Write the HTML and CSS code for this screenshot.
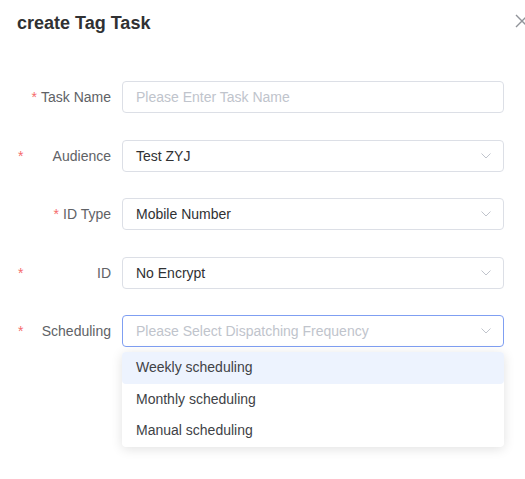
FILE: index.html
```html
<!DOCTYPE html>
<html lang="en">
<head>
  <meta charset="UTF-8" />
  <title>create Tag Task</title>
  <link rel="stylesheet" href="styles.css">
</head>
<body>
  <div class="dialog">
    <header class="dialog-header">
      <h1>create Tag Task</h1>
      <button class="close-btn" aria-label="Close">
        <svg width="14" height="14" viewBox="0 0 14 14"><path d="M1 1L13 13M13 1L1 13" stroke="#909399" stroke-width="1.4" fill="none"/></svg>
      </button>
    </header>

    <form class="task-form">
      <div class="form-row">
        <label class="form-label"><span class="star">*</span>Task Name</label>
        <div class="field">
          <input type="text" placeholder="Please Enter Task Name" />
        </div>
      </div>

      <div class="form-row">
        <label class="form-label split"><span class="star">*</span>Audience</label>
        <div class="field select">
          <span class="value">Test ZYJ</span>
          <svg class="chevron" width="10" height="6" viewBox="0 0 10 6"><path d="M0.5 0.5L5 5L9.5 0.5" stroke="#c0c4cc" fill="none"/></svg>
        </div>
      </div>

      <div class="form-row">
        <label class="form-label"><span class="star">*</span>ID Type</label>
        <div class="field select">
          <span class="value">Mobile Number</span>
          <svg class="chevron" width="10" height="6" viewBox="0 0 10 6"><path d="M0.5 0.5L5 5L9.5 0.5" stroke="#c0c4cc" fill="none"/></svg>
        </div>
      </div>

      <div class="form-row">
        <label class="form-label split"><span class="star">*</span>ID</label>
        <div class="field select">
          <span class="value">No Encrypt</span>
          <svg class="chevron" width="10" height="6" viewBox="0 0 10 6"><path d="M0.5 0.5L5 5L9.5 0.5" stroke="#c0c4cc" fill="none"/></svg>
        </div>
      </div>

      <div class="form-row">
        <label class="form-label split"><span class="star">*</span>Scheduling</label>
        <div class="select-wrap">
          <div class="field select focused">
            <span class="value placeholder">Please Select Dispatching Frequency</span>
            <svg class="chevron" width="10" height="6" viewBox="0 0 10 6"><path d="M0.5 0.5L5 5L9.5 0.5" stroke="#c0c4cc" fill="none"/></svg>
          </div>
          <ul class="dropdown">
            <li class="active">Weekly scheduling</li>
            <li>Monthly scheduling</li>
            <li>Manual scheduling</li>
          </ul>
        </div>
      </div>
    </form>
  </div>
</body>
</html>
```

FILE: styles.css
```css
body {
  margin: 0;
  background: #ffffff;
  font-family: "Liberation Sans", Arial, sans-serif;
  font-size: 14px;
  color: #303133;
}
.dialog {
  position: relative;
  height: 479px;
  overflow: hidden;
}
.dialog-header {
  padding: 11px 17px 0;
  height: 70px;
  box-sizing: border-box;
}
.dialog-header h1 {
  margin: 0;
  font-size: 18px;
  font-weight: bold;
  color: #303133;
  line-height: 24px;
}
.close-btn {
  position: absolute;
  top: 14px;
  right: -4px;
  padding: 0;
  border: none;
  background: none;
  cursor: pointer;
}
.task-form {
  padding: 11px 21px 0 18px;
}
.form-row {
  display: flex;
  align-items: center;
  gap: 11px;
  margin-bottom: 26.5px;
}
.form-label {
  width: 93px;
  flex-shrink: 0;
  text-align: right;
  color: #606266;
  line-height: 32px;
}
.form-label.split {
  display: flex;
  justify-content: space-between;
}
.star {
  color: #f56c6c;
  margin-right: 4px;
}
.field {
  flex: 1;
  height: 32px;
  box-sizing: border-box;
  border: 1px solid #dcdfe6;
  border-radius: 4px;
  display: flex;
  align-items: center;
  padding: 0 12px 0 13px;
}
.field input {
  border: none;
  outline: none;
  padding: 0;
  width: 100%;
  font: inherit;
  color: #303133;
}
.field input::placeholder {
  color: #c0c4cc;
}
.select .value {
  flex: 1;
  color: #303133;
}
.select .value.placeholder {
  color: #c0c4cc;
}
.field.focused {
  border-color: #7f9ff2;
}
.select-wrap {
  flex: 1;
  position: relative;
}
.dropdown {
  position: absolute;
  top: 37px;
  left: 0;
  right: 0;
  margin: 0;
  padding: 0;
  list-style: none;
  background: #ffffff;
  border-radius: 4px;
  box-shadow: 0 2px 12px rgba(0, 0, 0, 0.12);
}
.dropdown li {
  height: 31.7px;
  line-height: 31.7px;
  padding-left: 14px;
  color: #404246;
  border-radius: 4px;
}
.dropdown li.active {
  background: #edf3fe;
}
```
